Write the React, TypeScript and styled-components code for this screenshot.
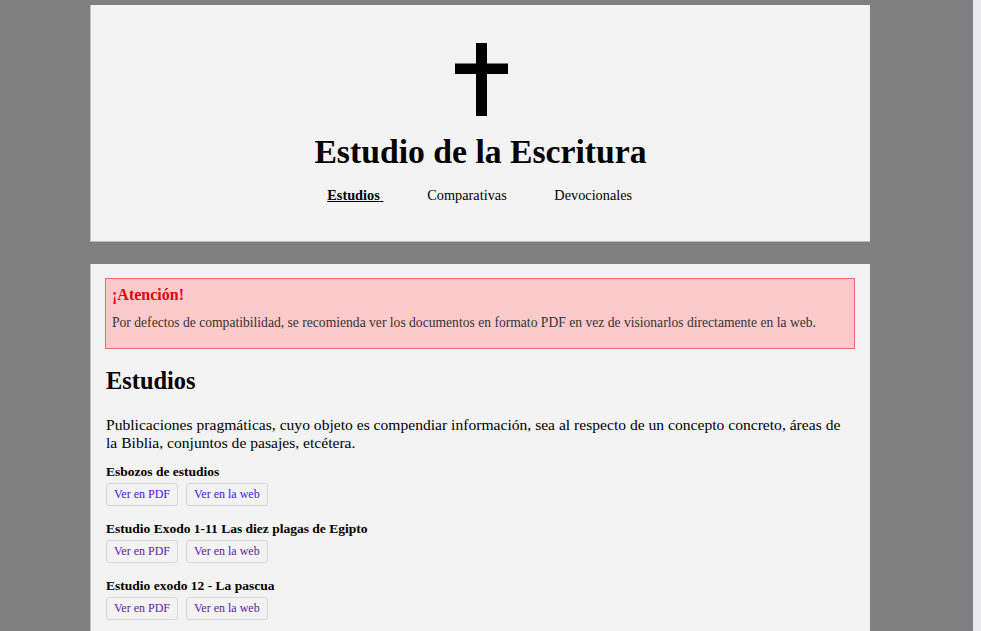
import React from "react";
import styled, { createGlobalStyle } from "styled-components";

const Global = createGlobalStyle`
  html, body { margin: 0; padding: 0; height: 100%; overflow: hidden; }
  body { font-family: "Liberation Serif", "Times New Roman", serif; color: #000; }
`;

const Shell = styled.div`
  display: flex;
  height: 100vh;
`;

const Main = styled.main`
  flex: 1;
  background: #808080;
  padding: 5px 0 0 90px;
  overflow: hidden;
`;

const Track = styled.div`
  width: 8px;
  background: #e9e9ee;
`;

const Card = styled.section<{ $header?: boolean }>`
  box-sizing: border-box;
  width: 780px;
  background: #f3f3f3;
  border-left: 1px solid #bcbcbc;
  border-bottom: 1px solid #bcbcbc;
  padding: ${(p) => (p.$header ? "38px 0 38px" : "14px 15px 20px 14px")};
  margin-bottom: 22px;
  display: flex;
  flex-direction: column;
  align-items: ${(p) => (p.$header ? "center" : "stretch")};
`;

const Cross = styled.svg`
  display: block;
  width: 53px;
  height: 73px;
  margin-left: 1px;
`;

const Title = styled.h1`
  font-size: 33.7px;
  font-weight: bold;
  line-height: 40px;
  margin: 16px 0 15px;
`;

const Nav = styled.nav`
  display: flex;
  gap: 44px;
  font-size: 14.3px;
  line-height: 16px;
  margin-left: 2px;
`;

const NavLink = styled.a<{ $active?: boolean }>`
  color: #000;
  font-weight: ${(p) => (p.$active ? "bold" : "normal")};
  text-decoration: ${(p) => (p.$active ? "underline" : "none")};
  cursor: pointer;
`;

const Alert = styled.div`
  background: #fccaca;
  border: 1px solid #f06a6a;
  padding: 7px 6px 17px;
`;

const AlertTitle = styled.div`
  color: #e8000f;
  font-weight: bold;
  font-size: 16px;
  line-height: 18px;
  margin-bottom: 11px;
`;

const AlertText = styled.p`
  margin: 0;
  font-size: 13.6px;
  line-height: 16px;
  color: #333;
`;

const H2 = styled.h2`
  font-size: 24.4px;
  line-height: 27px;
  margin: 18px 0 22px 1px;
`;

const Lead = styled.p`
  font-size: 15.6px;
  line-height: 18px;
  margin: 0 0 12px 1px;
`;

const Item = styled.div`
  margin-bottom: 15px;
`;

const ItemTitle = styled.h5`
  font-size: 13.5px;
  line-height: 15px;
  margin: 0 0 4px 1px;
`;

const Buttons = styled.div`
  display: flex;
  gap: 8px;
  margin-left: 1px;
`;

const Btn = styled.a<{ $visited?: boolean }>`
  display: inline-block;
  font-size: 12px;
  line-height: 15px;
  padding: 3px 7px;
  border: 1px solid #d8d8d8;
  border-radius: 3px;
  background: #f3f3f3;
  color: ${(p) => (p.$visited ? "#5c1aa6" : "#3a18f2")};
  text-decoration: none;
  cursor: pointer;
`;

const items = [
  { title: "Esbozos de estudios", visited: false },
  { title: "Estudio Exodo 1-11 Las diez plagas de Egipto", visited: true },
  { title: "Estudio exodo 12 - La pascua", visited: true },
  { title: "Estudio exodo 13 - Consagración de los primogénitos", visited: true },
];

export default function App() {
  return (
    <Shell>
      <Global />
      <Main>
        <Card $header>
          <Cross viewBox="0 0 53 73">
            <rect x="21" y="0" width="11" height="73" fill="#000" />
            <rect x="0" y="20.5" width="53" height="10.5" fill="#000" />
          </Cross>
          <Title>Estudio de la Escritura</Title>
          <Nav>
            <NavLink $active>Estudios{"\u00a0"}</NavLink>
            <NavLink>Comparativas{"\u00a0"}</NavLink>
            <NavLink>Devocionales{"\u00a0"}</NavLink>
          </Nav>
        </Card>
        <Card>
          <Alert>
            <AlertTitle>¡Atención!</AlertTitle>
            <AlertText>
              Por defectos de compatibilidad, se recomienda ver los documentos en formato PDF en vez de
              visionarlos directamente en la web.
            </AlertText>
          </Alert>
          <H2>Estudios</H2>
          <Lead>
            Publicaciones pragmáticas, cuyo objeto es compendiar información, sea al respecto de un
            concepto concreto, áreas de la Biblia, conjuntos de pasajes, etcétera.
          </Lead>
          {items.map((it) => (
            <Item key={it.title}>
              <ItemTitle>{it.title}</ItemTitle>
              <Buttons>
                <Btn $visited={it.visited}>Ver en PDF</Btn>
                <Btn $visited={it.visited}>Ver en la web</Btn>
              </Buttons>
            </Item>
          ))}
        </Card>
      </Main>
      <Track />
    </Shell>
  );
}
